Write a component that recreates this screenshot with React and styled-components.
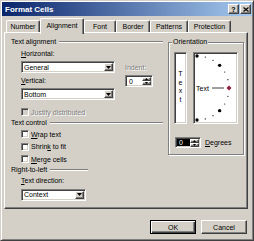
import React from "react";
import styled, { createGlobalStyle, css } from "styled-components";

const Global = createGlobalStyle`
  html, body { margin: 0; padding: 0; background: #d4d0c8; }
  body { font-family: "Liberation Sans", Arial, sans-serif; font-size: 7px; color: #000; }
  * { box-sizing: border-box; }
`;

const raised = css`
  border: 1px solid;
  border-color: #fff #404040 #404040 #fff;
  box-shadow: inset -1px -1px #808080;
`;

const sunken = css`
  border: 1px solid;
  border-color: #808080 #fff #fff #808080;
  box-shadow: inset 1px 1px #404040, inset -1px -1px #d4d0c8;
`;

const Window = styled.div`
  width: 254px;
  height: 241px;
  background: #d4d0c8;
  border: 1px solid;
  border-color: #d4d0c8 #404040 #404040 #d4d0c8;
  box-shadow: inset 1px 1px #fff, inset -1px -1px #808080;
  padding: 1px;
  display: flex;
  flex-direction: column;
`;

const TitleBar = styled.div`
  height: 14px;
  display: flex;
  align-items: center;
  padding: 0 1px 0 3px;
  background: linear-gradient(90deg, #0a246a, #a6caf0);
`;

const Title = styled.span`
  font-weight: bold;
  font-size: 8px;
  color: #fff;
`;

const Caps = styled.div`
  margin-left: auto;
  display: flex;
  gap: 1px;
`;

const CapBtn = styled.div`
  width: 11px;
  height: 10px;
  background: #d4d0c8;
  ${raised};
  display: flex;
  align-items: center;
  justify-content: center;
  font-weight: bold;
  font-size: 7px;
  line-height: 1;
`;

const Content = styled.div`
  flex: 1;
  display: flex;
  flex-direction: column;
  padding: 2px 4px 0 2px;
`;

const TabRow = styled.div`
  display: flex;
  align-items: flex-end;
  height: 14px;
  padding-left: 2px;
  position: relative;
  z-index: 1;
`;

const Tab = styled.div`
  width: ${(p) => p.$w}px;
  height: ${(p) => (p.$active ? 16 : 12)}px;
  margin-bottom: ${(p) => (p.$active ? -2 : 0)}px;
  padding-bottom: ${(p) => (p.$active ? 2 : 0)}px;
  background: #d4d0c8;
  border-top: 1px solid #fff;
  border-left: 1px solid #fff;
  border-right: 1px solid #404040;
  box-shadow: inset -1px 0 #808080;
  border-radius: 2px 2px 0 0;
  display: flex;
  align-items: center;
  justify-content: center;
  white-space: nowrap;
`;

const Panel = styled.div`
  height: 177px;
  ${raised};
  display: flex;
  align-items: flex-start;
  gap: 5px;
  padding: 5px 3px 0 6px;
`;

const LeftCol = styled.div`
  width: 152px;
  display: flex;
  flex-direction: column;
`;

const Heading = styled.div`
  display: flex;
  align-items: center;
  gap: 3px;
  height: 8px;
  line-height: 8px;
  width: ${(p) => (p.$w ? `${p.$w}px` : "auto")};
  margin-top: ${(p) => p.$mt || 0}px;
  white-space: nowrap;
  &::after {
    content: "";
    flex: 1;
    border-top: 1px solid #808080;
    border-bottom: 1px solid #fff;
  }
`;

const AlignGrid = styled.div`
  display: flex;
  gap: 10px;
  padding-left: 10px;
`;

const SubCol = styled.div`
  width: ${(p) => p.$w}px;
  display: flex;
  flex-direction: column;
  margin-top: ${(p) => p.$mt || 0}px;
`;

const FieldLabel = styled.div`
  height: 8px;
  line-height: 8px;
  white-space: nowrap;
  margin-top: ${(p) => p.$mt || 0}px;
  margin-left: ${(p) => p.$ml || 0}px;
  color: ${(p) => (p.$disabled ? "#808080" : "#000")};
  text-shadow: ${(p) => (p.$disabled ? "1px 1px #fff" : "none")};
`;

const SelectBox = styled.div`
  width: ${(p) => p.$w}px;
  height: 12px;
  margin-top: ${(p) => p.$mt || 0}px;
  margin-left: ${(p) => p.$ml || 0}px;
  background: #fff;
  ${sunken};
  padding: 1px;
  display: flex;
  align-items: center;
`;

const SelectText = styled.span`
  flex: 1;
  padding-left: 1px;
  white-space: nowrap;
`;

const ArrowBtn = styled.div`
  width: 9px;
  height: 8px;
  background: #d4d0c8;
  ${raised};
  display: flex;
  align-items: center;
  justify-content: center;
`;

const SpinBox = styled.div`
  width: ${(p) => p.$w}px;
  height: ${(p) => p.$h}px;
  margin-top: ${(p) => p.$mt || 0}px;
  background: #fff;
  ${sunken};
  padding: 1px;
  display: flex;
`;

const SpinValue = styled.div`
  flex: 1;
  display: flex;
  align-items: center;
  padding-left: 2px;
  background: ${(p) => (p.$selected ? "#000" : "#fff")};
  color: ${(p) => (p.$selected ? "#fff" : "#000")};
`;

const SpinBtns = styled.div`
  width: 9px;
  display: flex;
  flex-direction: column;
`;

const SpinBtn = styled.div`
  flex: 1;
  background: #d4d0c8;
  ${raised};
  display: flex;
  align-items: center;
  justify-content: center;
`;

const CheckRow = styled.div`
  display: flex;
  align-items: center;
  gap: 2px;
  height: ${(p) => p.$h || 12.5}px;
  margin-top: ${(p) => p.$mt || 0}px;
  padding-left: 10px;
  white-space: nowrap;
  color: ${(p) => (p.$disabled ? "#808080" : "#000")};
  text-shadow: ${(p) => (p.$disabled ? "1px 1px #fff" : "none")};
`;

const Check = styled.div`
  width: 8px;
  height: 8px;
  background: ${(p) => (p.$disabled ? "#d4d0c8" : "#fff")};
  ${sunken};
`;

const OrientGroup = styled.div`
  position: relative;
  width: 76px;
  margin-top: 4px;
  border: 1px solid #808080;
  box-shadow: inset 1px 1px #fff, 1px 1px #fff;
  padding: 9px 5px 6px 5px;
`;

const Legend = styled.span`
  position: absolute;
  top: -5px;
  left: 3px;
  padding: 0 1px;
  line-height: 8px;
  background: #d4d0c8;
`;

const OrientRow = styled.div`
  display: flex;
  gap: 6px;
`;

const VertBox = styled.div`
  width: 13px;
  height: 72px;
  background: #fff;
  ${sunken};
  display: flex;
  flex-direction: column;
  align-items: center;
  padding-top: 17px;
  line-height: 8.7px;
`;

const DialBox = styled.div`
  width: 45px;
  height: 72px;
  background: #fff;
  ${sunken};
  padding: 1px;
`;

const DegreesRow = styled.div`
  display: flex;
  align-items: center;
  gap: 4px;
  margin-top: 13px;
  padding-left: 1px;
`;

const ButtonRow = styled.div`
  display: flex;
  justify-content: flex-end;
  gap: 5px;
  margin-top: 11px;
  padding-right: 1px;
`;

const Button = styled.div`
  width: 46px;
  height: 14px;
  background: #d4d0c8;
  display: flex;
  align-items: center;
  justify-content: center;
  ${(p) =>
    p.$default
      ? css`
          border: 1px solid #000;
          box-shadow: inset 1px 1px #fff, inset -1px -1px #404040, inset -2px -2px #808080;
        `
      : raised};
`;

const U = styled.span`
  text-decoration: underline;
`;

const Down = () => (
  <svg width="5" height="3" viewBox="0 0 5 3">
    <polygon points="0,0 5,0 2.5,3" fill="#000" />
  </svg>
);
const Up = () => (
  <svg width="3" height="2" viewBox="0 0 3 2">
    <polygon points="0,2 3,2 1.5,0" fill="#000" />
  </svg>
);
const SmallDown = () => (
  <svg width="3" height="2" viewBox="0 0 3 2">
    <polygon points="0,0 3,0 1.5,2" fill="#000" />
  </svg>
);

const Select = ({ w, mt, ml, children }) => (
  <SelectBox $w={w} $mt={mt} $ml={ml}>
    <SelectText>{children}</SelectText>
    <ArrowBtn>
      <Down />
    </ArrowBtn>
  </SelectBox>
);

const Spinner = ({ w, h, mt, selected }) => (
  <SpinBox $w={w} $h={h} $mt={mt}>
    <SpinValue $selected={selected}>0</SpinValue>
    <SpinBtns>
      <SpinBtn>
        <Up />
      </SpinBtn>
      <SpinBtn>
        <SmallDown />
      </SpinBtn>
    </SpinBtns>
  </SpinBox>
);

const Dial = () => {
  const angles = [90, 75, 60, 45, 30, 15, -15, -30, -45, -60, -75, -90];
  const cx = 2;
  const cy = 34;
  const r = 32;
  return (
    <svg width="41" height="68" viewBox="0 0 41 68" style={{ display: "block" }}>
      {angles.map((a) => {
        const rad = (a * Math.PI) / 180;
        const x = cx + r * Math.cos(rad);
        const y = cy - r * Math.sin(rad);
        const big = Math.abs(a) === 90 || Math.abs(a) === 45;
        return <circle key={a} cx={x} cy={y} r={big ? 1.7 : 0.6} fill="#000" />;
      })}
      <polygon points="34,31.5 36.5,34 34,36.5 31.5,34" fill="#8b1c3c" />
      <line x1="17" y1="34" x2="29" y2="34" stroke="#404040" strokeWidth="1" />
      <text x="1" y="36.5" fontSize="7" fontFamily="Liberation Sans, Arial, sans-serif" fill="#000">
        Text
      </text>
    </svg>
  );
};

const CloseGlyph = () => (
  <svg width="6" height="5" viewBox="0 0 6 5">
    <path d="M0.5 0.5 L5.5 4.5 M5.5 0.5 L0.5 4.5" stroke="#000" strokeWidth="1.2" />
  </svg>
);

export default function App() {
  return (
    <>
      <Global />
      <Window>
        <TitleBar>
          <Title>Format Cells</Title>
          <Caps>
            <CapBtn>?</CapBtn>
            <CapBtn>
              <CloseGlyph />
            </CapBtn>
          </Caps>
        </TitleBar>
        <Content>
          <TabRow>
            <Tab $w={34}>Number</Tab>
            <Tab $w={44} $active>
              Alignment
            </Tab>
            <Tab $w={32}>Font</Tab>
            <Tab $w={34}>Border</Tab>
            <Tab $w={38}>Patterns</Tab>
            <Tab $w={43}>Protection</Tab>
          </TabRow>
          <Panel>
            <LeftCol>
              <Heading>Text alignment</Heading>
              <AlignGrid>
                <SubCol $w={94}>
                  <FieldLabel $mt={4}>
                    <U>H</U>orizontal:
                  </FieldLabel>
                  <Select w={94} mt={3}>
                    General
                  </Select>
                  <FieldLabel $mt={4}>
                    <U>V</U>ertical:
                  </FieldLabel>
                  <Select w={94} mt={3}>
                    Bottom
                  </Select>
                </SubCol>
                <SubCol $w={28} $mt={18}>
                  <FieldLabel $disabled>Indent:</FieldLabel>
                  <Spinner w={28} h={12} mt={3} />
                </SubCol>
              </AlignGrid>
              <CheckRow $disabled $h={10} $mt={7}>
                <Check $disabled />
                Justify distributed
              </CheckRow>
              <Heading $mt={2}>Text control</Heading>
              <CheckRow $mt={1}>
                <Check />
                <span>
                  <U>W</U>rap text
                </span>
              </CheckRow>
              <CheckRow>
                <Check />
                <span>
                  Shrin<U>k</U> to fit
                </span>
              </CheckRow>
              <CheckRow>
                <Check />
                <span>
                  <U>M</U>erge cells
                </span>
              </CheckRow>
              <Heading $w={77}>Right-to-left</Heading>
              <FieldLabel $mt={3} $ml={10}>
                <U>T</U>ext direction:
              </FieldLabel>
              <Select w={65} mt={4} ml={10}>
                Context
              </Select>
            </LeftCol>
            <OrientGroup>
              <Legend>Orientation</Legend>
              <OrientRow>
                <VertBox>
                  <span>T</span>
                  <span>e</span>
                  <span>x</span>
                  <span>t</span>
                </VertBox>
                <DialBox>
                  <Dial />
                </DialBox>
              </OrientRow>
              <DegreesRow>
                <Spinner w={26} h={11} selected />
                <span>
                  <U>D</U>egrees
                </span>
              </DegreesRow>
            </OrientGroup>
          </Panel>
          <ButtonRow>
            <Button $default>OK</Button>
            <Button>Cancel</Button>
          </ButtonRow>
        </Content>
      </Window>
    </>
  );
}
